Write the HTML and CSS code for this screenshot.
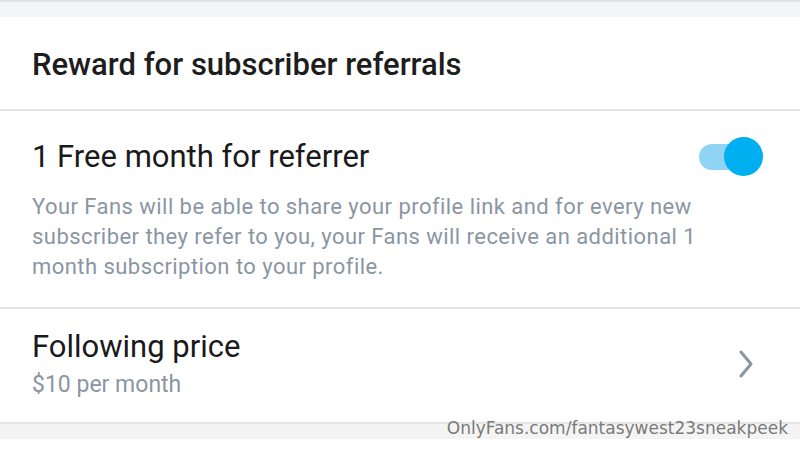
FILE: index.html
```html
<!DOCTYPE html>
<html lang="en">
<head>
    <meta charset="UTF-8">
    <meta name="viewport" content="width=device-width, initial-scale=1.0">
    <title>Referral settings</title>
    <link rel="stylesheet" href="styles.css">
</head>
<body>
    <div class="page">
        <div class="top-band"></div>

        <!-- Section header -->
        <div class="section-title">
            <h2>Reward for subscriber referrals</h2>
        </div>

        <!-- Referral toggle -->
        <div class="setting">
            <div class="setting-head">
                <span class="setting-label">1 Free month for referrer</span>
                <span class="toggle on"><span class="knob"></span></span>
            </div>
            <p class="setting-desc">Your Fans will be able to share your profile link and for every new subscriber they refer to you, your Fans will receive an additional 1 month subscription to your profile.</p>
        </div>

        <!-- Price row -->
        <div class="setting link-row">
            <div>
                <div class="setting-label">Following price</div>
                <div class="setting-value">$10 per month</div>
            </div>
            <svg class="chevron" width="16" height="30" viewBox="0 0 16 30">
                <path d="M3 3 L13 15 L3 27" fill="none" stroke="#8a96a3" stroke-width="3" stroke-linecap="round" stroke-linejoin="round"/>
            </svg>
        </div>

        <div class="bottom-band">
            <span class="watermark">OnlyFans.com/fantasywest23sneakpeek</span>
        </div>
    </div>
</body>
</html>
```

FILE: styles.css
```css
body {
    margin: 0;
    background: #fff;
    font-family: Roboto, "Noto Sans", sans-serif;
    color: #1a1a1a;
}

.page {
    width: 800px;
    height: 452px;
    overflow: hidden;
}

/* Light strip at the very top */
.top-band {
    height: 15px;
    border-top: 2px solid #dfe3e6;
    background: #f3f6f9;
}

.section-title {
    height: 89px;
    padding: 3px 32px 0;
    display: flex;
    align-items: center;
    border-bottom: 2px solid #e3e5e7;
}

h2 {
    margin: 0;
    font-size: 31px;
    font-weight: 500;
    color: #1d1d1d;
}

.setting {
    padding: 28px 32px 25px;
    border-bottom: 2px solid #e3e5e7;
}

.setting-head {
    display: flex;
    align-items: center;
    justify-content: space-between;
    height: 36px;
}

.setting-label {
    font-size: 31px;
    line-height: 36px;
    color: #1a1a1a;
}

.setting-desc {
    max-width: 705px;
    margin: 17px 0 0;
    font-size: 22px;
    line-height: 30px;
    letter-spacing: 0.45px;
    color: #8a96a3;
}

/* Switch */
.toggle {
    position: relative;
    width: 46px;
    height: 26px;
    margin-right: 23px;
    border-radius: 13px;
    background: #8fd4f5;
}

.toggle .knob {
    position: absolute;
    top: -7px;
    right: -18px;
    width: 39px;
    height: 39px;
    border-radius: 50%;
    background: #00aff0;
}

.link-row {
    display: flex;
    align-items: center;
    justify-content: space-between;
    height: 89px;
    padding: 10px 46px 14px 32px;
}

.setting-value {
    margin-top: 6px;
    font-size: 23px;
    line-height: 28px;
    color: #8a96a3;
}

.bottom-band {
    position: relative;
    height: 15px;
    background: #f4f4f4;
}

.watermark {
    position: absolute;
    right: 12px;
    top: -6px;
    font-family: "DejaVu Sans", sans-serif;
    font-size: 17px;
    color: #7a7a7a;
}
```
